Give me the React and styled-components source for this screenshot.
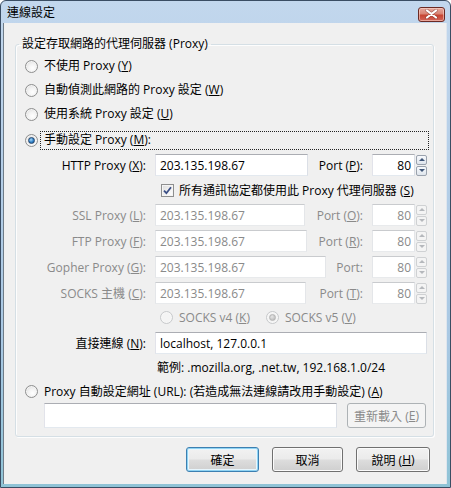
import React from 'react';
import styled, { createGlobalStyle, css } from 'styled-components';

const GlobalStyle = createGlobalStyle`
  html, body { margin: 0; padding: 0; background: #ffffff; }
  body {
    font-family: "Open Sans", "Noto Sans CJK TC", sans-serif;
    font-size: 12px;
    color: #000;
  }
  * { box-sizing: border-box; }
`;

const DIM = '#8a8a8a';

function Dialog() {
  return (
    <Window>
      <TitleBar>
        <Title>連線設定</Title>
        <CloseButton aria-label="close">
          <svg width="13" height="10" viewBox="0 0 13 10">
            <path d="M2 1.5 L11 8.5 M11 1.5 L2 8.5" stroke="#5a1f1a" strokeWidth="3.4" strokeLinecap="round" opacity="0.45" />
            <path d="M2 1.5 L11 8.5 M11 1.5 L2 8.5" stroke="#ffffff" strokeWidth="2.2" strokeLinecap="round" />
          </svg>
        </CloseButton>
      </TitleBar>

      <Client>
        <Fieldset>
          <Legend>設定存取網路的代理伺服器 (Proxy)</Legend>
          <Inner>
            <RadioRow $h={24}>
              <Radio />
              <span>不使用 Proxy (<u>Y</u>)</span>
            </RadioRow>
            <RadioRow $h={24}>
              <Radio />
              <span>自動偵測此網路的 Proxy 設定 (<u>W</u>)</span>
            </RadioRow>
            <RadioRow $h={24}>
              <Radio />
              <span>使用系統 Proxy 設定 (<u>U</u>)</span>
            </RadioRow>
            <RadioRow $h={28}>
              <Radio checked />
              <FocusLabel>手動設定 Proxy (<u>M</u>):</FocusLabel>
            </RadioRow>

            <FieldRow>
              <FieldLabel>HTTP Proxy (<u>X</u>):</FieldLabel>
              <TextBox $w={153}>203.135.198.67</TextBox>
              <PortLabel>Port (<u>P</u>):</PortLabel>
              <PortBox value="80" />
            </FieldRow>

            <CheckRow>
              <CheckBox>
                <svg width="9" height="9" viewBox="0 0 9 9">
                  <path d="M1 4.6 L3.4 7.2 L8 1.2" fill="none" stroke="#3b4f86" strokeWidth="1.8" />
                </svg>
              </CheckBox>
              <span>所有通訊協定都使用此 Proxy 代理伺服器 (<u>S</u>)</span>
            </CheckRow>

            <FieldRow>
              <FieldLabel $disabled>SSL Proxy (<u>L</u>):</FieldLabel>
              <TextBox $w={150} $disabled>203.135.198.67</TextBox>
              <PortLabel $disabled>Port (<u>O</u>):</PortLabel>
              <PortBox value="80" disabled />
            </FieldRow>
            <FieldRow $mt={4}>
              <FieldLabel $disabled>FTP Proxy (<u>F</u>):</FieldLabel>
              <TextBox $w={152} $disabled>203.135.198.67</TextBox>
              <PortLabel $disabled>Port (<u>R</u>):</PortLabel>
              <PortBox value="80" disabled />
            </FieldRow>
            <FieldRow $mt={4}>
              <FieldLabel $disabled>Gopher Proxy (<u>G</u>):</FieldLabel>
              <TextBox $w={171} $disabled>203.135.198.67</TextBox>
              <PortLabel $disabled>Port:</PortLabel>
              <PortBox value="80" disabled />
            </FieldRow>
            <FieldRow $mt={4}>
              <FieldLabel $disabled>SOCKS 主機 (<u>C</u>):</FieldLabel>
              <TextBox $w={151} $disabled>203.135.198.67</TextBox>
              <PortLabel $disabled>Port (<u>T</u>):</PortLabel>
              <PortBox value="80" disabled />
            </FieldRow>

            <SocksRow>
              <SocksOption>
                <Radio disabled />
                <span>SOCKS v4 (<u>K</u>)</span>
              </SocksOption>
              <SocksOption>
                <Radio disabled checked />
                <span>SOCKS v5 (<u>V</u>)</span>
              </SocksOption>
            </SocksRow>

            <FieldRow $mt={2}>
              <FieldLabel>直接連線 (<u>N</u>):</FieldLabel>
              <TextBox $grow>localhost, 127.0.0.1</TextBox>
            </FieldRow>
            <ExampleRow>範例: .mozilla.org, .net.tw, 192.168.1.0/24</ExampleRow>

            <RadioRow $h={23}>
              <Radio />
              <span>Proxy 自動設定網址 (URL): (若造成無法連線請改用手動設定) (<u>A</u>)</span>
            </RadioRow>
            <UrlRow>
              <TextBox $grow $h={25} />
              <Button $disabled $w={79}>重新載入 (<u>E</u>)</Button>
            </UrlRow>
          </Inner>
        </Fieldset>

        <ButtonBar>
          <Button $default $w={73}>確定</Button>
          <Button $w={71}>取消</Button>
          <Button $w={74}>說明 (<u>H</u>)</Button>
        </ButtonBar>
      </Client>
    </Window>
  );
}

function Radio({ checked, disabled }) {
  return (
    <RadioCircle $disabled={disabled}>
      {checked && <RadioDot $disabled={disabled} />}
    </RadioCircle>
  );
}

function PortBox({ value, disabled }) {
  return (
    <PortWrap>
      <PortInput $disabled={disabled}>{value}</PortInput>
      <Spinner>
        <SpinButton $disabled={disabled}><Arrow $up $disabled={disabled} /></SpinButton>
        <SpinButton $disabled={disabled}><Arrow $disabled={disabled} /></SpinButton>
      </Spinner>
    </PortWrap>
  );
}

const Window = styled.div`
  width: 451px;
  height: 488px;
  border: 1px solid #3a4d63;
  border-radius: 6px 6px 0 0;
  background: linear-gradient(to bottom, #c2d7ed 0%, #b6cfe8 30%, #a9c8e3 70%, #8fc3d6 100%);
  display: flex;
  flex-direction: column;
  overflow: hidden;
`;

const TitleBar = styled.div`
  height: 22px;
  display: flex;
  align-items: center;
  justify-content: space-between;
  padding: 0 5px 0 6px;
`;

const Title = styled.div`
  font-size: 12px;
  line-height: 16px;
  padding-top: 1px;
  color: #000;
`;

const CloseButton = styled.div`
  width: 27px;
  height: 15px;
  margin-top: 4px;
  border: 1px solid #6b2a24;
  border-radius: 3px;
  background: linear-gradient(to bottom, #e6a89d 0%, #d98474 45%, #c74532 55%, #d2665a 100%);
  box-shadow: inset 0 0 0 1px rgba(255, 220, 210, 0.55);
  display: flex;
  align-items: center;
  justify-content: center;
`;

const Client = styled.div`
  flex: 1;
  margin: 0 3px 3px 2px;
  background: #f0f0f0;
  border-left: 1px solid #6f7c88;
  border-right: 1px solid #dfe6ee;
  padding: 13px 12px 0 11px;
  display: flex;
  flex-direction: column;
`;

const Fieldset = styled.fieldset`
  margin: 0;
  padding: 0;
  border: 1px solid #d5dfe5;
  border-radius: 3px;
  box-shadow: inset 1px 1px 0 #fdfdfd, 1px 1px 0 #fdfdfd;
  min-width: 0;
`;

const Legend = styled.legend`
  margin-left: 3px;
  padding: 0 3px;
  line-height: 16px;
  font-size: 12px;
  color: #000;
`;

const Inner = styled.div`
  padding: 2px 6px 8px 9px;
  display: flex;
  flex-direction: column;
`;

const RadioRow = styled.div`
  height: ${({ $h }) => $h}px;
  display: flex;
  align-items: center;
  gap: 6px;
  line-height: 16px;
  white-space: nowrap;
`;

const RadioCircle = styled.span`
  position: relative;
  flex: none;
  width: 13px;
  height: 13px;
  border-radius: 50%;
  border: 1px solid ${({ $disabled }) => ($disabled ? '#c7c9cb' : '#8e8f8f')};
  background: ${({ $disabled }) => ($disabled
    ? '#f4f4f4'
    : 'radial-gradient(circle at 60% 65%, #ffffff 0%, #f2f2f2 45%, #d2d2d2 100%)')};
  box-shadow: inset 0 0 0 1px ${({ $disabled }) => ($disabled ? '#f7f7f7' : '#f4f4f4')};
  display: flex;
  align-items: center;
  justify-content: center;
`;

const RadioDot = styled.span`
  width: 7px;
  height: 7px;
  border-radius: 50%;
  ${({ $disabled }) => ($disabled
    ? css`
        background: radial-gradient(circle at 40% 35%, #e6e6e6 0%, #c1c1c1 70%, #a9a9a9 100%);
        border: 1px solid #b6b6b6;
      `
    : css`
        background: radial-gradient(circle at 40% 35%, #a8d8f8 0%, #2d7fc6 55%, #1a4f86 100%);
        border: 1px solid #26456b;
      `)}
`;

const FocusLabel = styled.span`
  flex: 1;
  height: 19px;
  margin-left: -4px;
  margin-right: -2px;
  padding: 0 3px;
  border: 1px dotted #222;
  display: flex;
  align-items: center;
`;

const FieldRow = styled.div`
  height: 22px;
  margin-top: ${({ $mt }) => $mt || 0}px;
  display: flex;
  align-items: center;
  white-space: nowrap;
`;

const FieldLabel = styled.span`
  width: 121px;
  margin-right: 9px;
  text-align: right;
  color: ${({ $disabled }) => ($disabled ? DIM : '#000')};
`;

const TextBox = styled.div`
  height: ${({ $h }) => $h || 22}px;
  width: ${({ $w }) => ($w ? `${$w}px` : 'auto')};
  flex: ${({ $grow }) => ($grow ? 1 : 'none')};
  border: 1px solid;
  border-color: ${({ $disabled }) => ($disabled
    ? '#c9cbce #e4e6e9 #e8eaec #e4e6e9'
    : '#abadb3 #dbdfe6 #e3e9ef #e2e3ea')};
  background: #fff;
  padding: 0 4px;
  display: flex;
  align-items: center;
  color: ${({ $disabled }) => ($disabled ? DIM : '#000')};
`;

const PortLabel = styled.span`
  flex: 1;
  text-align: right;
  padding-right: 9px;
  color: ${({ $disabled }) => ($disabled ? DIM : '#000')};
`;

const PortWrap = styled.div`
  display: flex;
  align-items: center;
  gap: 1px;
`;

const PortInput = styled(TextBox)`
  width: 43px;
  justify-content: flex-end;
  padding: 0 3px;
`;

const Spinner = styled.div`
  width: 11px;
  height: 21px;
  display: flex;
  flex-direction: column;
  gap: 1px;
`;

const SpinButton = styled.div`
  flex: 1;
  border: 1px solid ${({ $disabled }) => ($disabled ? '#cfd1d3' : '#9aa2ad')};
  border-radius: 2px;
  background: ${({ $disabled }) => ($disabled
    ? '#f4f4f4'
    : 'linear-gradient(to bottom, #f7f9fc, #dfe5ec)')};
  display: flex;
  align-items: center;
  justify-content: center;
`;

const Arrow = styled.span`
  width: 0;
  height: 0;
  border-left: 3px solid transparent;
  border-right: 3px solid transparent;
  ${({ $up, $disabled }) => ($up
    ? css`border-bottom: 3px solid ${$disabled ? '#b5b8bc' : '#3f5577'};`
    : css`border-top: 3px solid ${$disabled ? '#b5b8bc' : '#3f5577'};`)}
`;

const CheckRow = styled.div`
  height: 28px;
  padding-left: 136px;
  display: flex;
  align-items: center;
  gap: 5px;
  white-space: nowrap;
`;

const CheckBox = styled.span`
  flex: none;
  width: 13px;
  height: 13px;
  border: 1px solid #8e8f8f;
  background: linear-gradient(135deg, #dcdcdc 0%, #f6f6f6 70%, #ffffff 100%);
  box-shadow: inset 0 0 0 1px #f4f4f4;
  display: flex;
  align-items: center;
  justify-content: center;
`;

const SocksRow = styled.div`
  height: 26px;
  padding-left: 135px;
  display: flex;
  align-items: center;
  gap: 16px;
  white-space: nowrap;
  color: ${DIM};
`;

const SocksOption = styled.div`
  display: flex;
  align-items: center;
  gap: 6px;
`;

const ExampleRow = styled.div`
  height: 26px;
  padding-left: 132px;
  display: flex;
  align-items: center;
  white-space: nowrap;
`;

const UrlRow = styled.div`
  height: 25px;
  padding: 0 1px 0 19px;
  display: flex;
  align-items: center;
  gap: 10px;
`;

const Button = styled.div`
  width: ${({ $w }) => $w}px;
  height: 25px;
  border-radius: 3px;
  display: flex;
  align-items: center;
  justify-content: center;
  white-space: nowrap;
  border: 1px solid #707070;
  background: linear-gradient(to bottom, #f2f2f2 0%, #ebebeb 48%, #dddddd 52%, #cfcfcf 100%);
  box-shadow: inset 0 0 0 1px #fbfbfb;
  color: #000;
  ${({ $default }) => $default && css`
    border-color: #3c7fb1;
    box-shadow: inset 0 0 0 1px #8fd3f3, inset 0 0 0 2px #e8f6fd;
  `}
  ${({ $disabled }) => $disabled && css`
    border-color: #adb2b5;
    background: #f4f4f4;
    box-shadow: none;
    color: ${DIM};
  `}
`;

const ButtonBar = styled.div`
  margin-top: 10px;
  padding-right: 4px;
  display: flex;
  justify-content: flex-end;
  gap: 13px;
`;

export default function App() {
  return (
    <>
      <GlobalStyle />
      <Dialog />
    </>
  );
}
